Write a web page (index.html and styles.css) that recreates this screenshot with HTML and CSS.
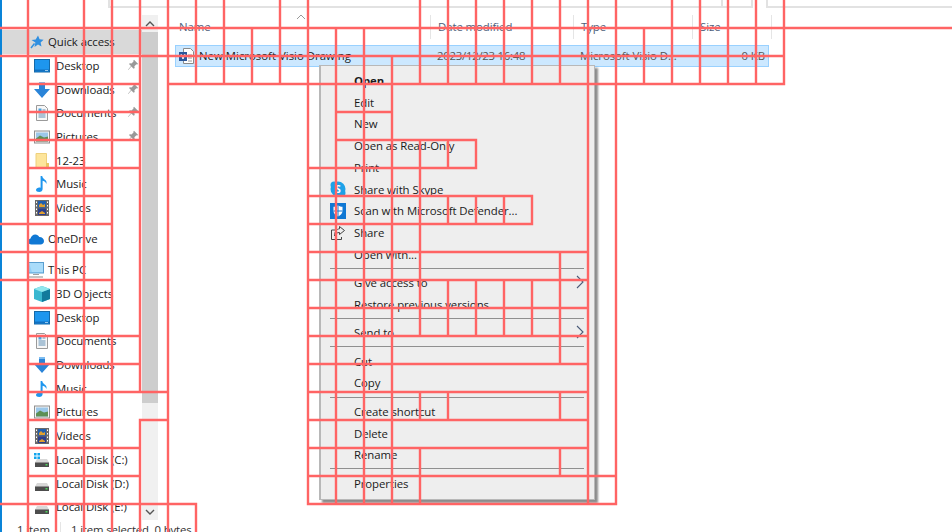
FILE: index.html
```html
<!DOCTYPE html>
<html lang="en">
<head>
<meta charset="utf-8">
<title>File Explorer</title>
<link rel="stylesheet" href="styles.css">
</head>
<body>
<svg class="defs" width="0" height="0" aria-hidden="true">
  <defs>
    <symbol id="i-pin" viewBox="0 0 12 12"><path d="M7 0.8l4.2 4.2-1.2.6-.6-.3-2 2 .3 1.7-1 .8L4.3 7.4 1.3 11 1 10.7l3-3.6-2-2 .9-.9 1.6.2 2-2-.1-.8z" fill="#999"/></symbol>
    <symbol id="i-desktop" viewBox="0 0 16 14"><rect x="0.5" y="0.5" width="15" height="12.5" fill="#1e96ee" stroke="#1569a8"/><rect x="1" y="10.5" width="14" height="2" fill="#1270c0"/><rect x="11" y="11.2" width="3" height="0.8" fill="#bde0f7"/></symbol>
    <symbol id="i-down" viewBox="0 0 16 16"><path d="M5 0h6v7h5l-8 9-8-9h5z" fill="#2a84d8"/><path d="M5 0h6v2H5z" fill="#7dbcf0"/></symbol>
    <symbol id="i-doc" viewBox="0 0 16 16"><path d="M2.5.5h8l3 3v12h-11z" fill="#f7f7f7" stroke="#9a9a9a"/><path d="M4.5 3.5h3v3h-3z" fill="#4aa3e0"/><path d="M8.5 5h3M4.5 8h7M4.5 10h7M4.5 12h7" stroke="#5f8fb5" fill="none"/></symbol>
    <symbol id="i-pic" viewBox="0 0 16 13"><rect x="0.5" y="0.5" width="15" height="12" fill="#f5f5f5" stroke="#8f8f8f"/><rect x="2" y="2" width="12" height="9" fill="#9cc8ea"/><path d="M2 8l4-3 4 2 4-1v5H2z" fill="#5d8f55"/></symbol>
    <symbol id="i-folder" viewBox="0 0 14 16"><path d="M1 .5h10.5v15H1z" fill="#fde59b" stroke="#eed07c"/><path d="M11 10h3v6h-3z" fill="#e9c663"/></symbol>
    <symbol id="i-music" viewBox="0 0 12 16"><path d="M4.6 0h1.6c.4 2.2 2 3 3.600 4.600.8 1 .9 2.300.6 3.400-.4-1.400-1.600-2.500-3.800-3.200V13c0 1.700-1.500 3-3.300 3C1.200 16 0 15.200 0 14c0-1.500 1.800-2.500 3.200-2.500.5 0 1 .1 1.400.3z" fill="#1e96ee"/></symbol>
    <symbol id="i-video" viewBox="0 0 14 16"><rect width="14" height="16" fill="#6a6a6a"/><rect x="3" y="1" width="8" height="6.500" fill="#1f5fb0"/><rect x="3" y="8.500" width="8" height="6.500" fill="#2a3f8f"/><path d="M4 5l2-2 2 2 2-1v3H4zM4 13l3-2 3 2v1H4z" fill="#e0a030"/><path d="M1 1.500h1v1.500H1zM1 5h1v1.500H1zM1 8.500h1V10H1zM1 12h1v1.500H1zM12 1.500h1v1.500h-1zM12 5h1v1.500h-1zM12 8.500h1V10h-1zM12 12h1v1.500h-1z" fill="#fff"/></symbol>
    <symbol id="i-cloud" viewBox="0 0 16 11"><path d="M3.500 11C1.500 11 0 9.700 0 8c0-1.500 1-2.600 2.500-3C3 2.800 5 1 7.300 1c1.800 0 3.200 1 4 2.400C14 3.300 16 5 16 7.500c0 2-1.500 3.500-3.500 3.500z" fill="#0f78d4"/></symbol>
    <symbol id="i-pc" viewBox="0 0 16 16"><rect x="0.500" y="0.500" width="15" height="10.500" fill="#8fd0f8" stroke="#5a9fd0"/><path d="M1 1h14v9H4z" fill="#a9dcfa"/><rect x="5" y="12" width="6" height="1" fill="#a0a0a0"/><rect x="1" y="14" width="14" height="2" fill="#c4c4c4"/></symbol>
    <symbol id="i-cube" viewBox="0 0 16 16"><path d="M8 0l8 3v10l-8 3-8-3V3z" fill="#39b7d0"/><path d="M8 6l8-3v10l-8 3z" fill="#127a9c"/><path d="M8 0l8 3-8 3-8-3z" fill="#8fe6ee"/></symbol>
    <symbol id="i-disk" viewBox="0 0 14 8"><path d="M2 0h10l2 3.500V8H0V3.500z" fill="#d8d8d8"/><rect y="3.500" width="14" height="4.500" fill="#4d4d4d"/><rect x="10.500" y="5" width="2" height="1.500" fill="#4fd35c"/></symbol>
    <symbol id="i-win" viewBox="0 0 7 7"><path d="M0 0h3v3H0zM4 0h3v3H4zM0 4h3v3H0zM4 4h3v3H4z" fill="#12a5ee"/></symbol>
    <symbol id="i-chev" viewBox="0 0 8 14"><path d="M1 1l6 6-6 6" fill="none" stroke="#4a5a78" stroke-width="1.100"/></symbol>
  </defs>
</svg>

<div class="window">
  <div class="toolbar">
    <div class="tool-box tool-address"></div>
    <div class="tool-box tool-refresh"></div>
    <div class="tool-box tool-search"></div>
  </div>
  <div class="panes">
    <nav class="sidebar">
      <div class="tree">
        <div class="row head selected"><svg class="star" viewBox="0 0 14 14"><path d="M8 .5l1.600 3.700 4 .5-3 2.700.9 4-3.500-2-3.500 2.600.9-4.400L1.500 5l4.200-.6z" fill="#2f8fe0"/><path d="M4.500 8.500L1 13" stroke="#2f8fe0" stroke-width="1.500"/></svg><span>Quick access</span></div>
        <div class="row"><svg class="ico ico-w"><use href="#i-desktop"/></svg><span class="name">Desktop</span><svg class="pin"><use href="#i-pin"/></svg></div>
        <div class="row"><svg class="ico"><use href="#i-down"/></svg><span class="name">Downloads</span><svg class="pin"><use href="#i-pin"/></svg></div>
        <div class="row"><svg class="ico"><use href="#i-doc"/></svg><span class="name">Documents</span><svg class="pin"><use href="#i-pin"/></svg></div>
        <div class="row"><svg class="ico ico-w"><use href="#i-pic"/></svg><span class="name">Pictures</span><svg class="pin"><use href="#i-pin"/></svg></div>
        <div class="row"><svg class="ico"><use href="#i-folder"/></svg><span class="name">12-23</span></div>
        <div class="row"><svg class="ico"><use href="#i-music"/></svg><span class="name">Music</span></div>
        <div class="row"><svg class="ico"><use href="#i-video"/></svg><span class="name">Videos</span></div>
        <div class="row head group"><svg class="ico-head"><use href="#i-cloud"/></svg><span>OneDrive</span></div>
        <div class="row head group"><svg class="ico-head"><use href="#i-pc"/></svg><span>This PC</span></div>
        <div class="row"><svg class="ico"><use href="#i-cube"/></svg><span class="name">3D Objects</span></div>
        <div class="row"><svg class="ico ico-w"><use href="#i-desktop"/></svg><span class="name">Desktop</span></div>
        <div class="row"><svg class="ico"><use href="#i-doc"/></svg><span class="name">Documents</span></div>
        <div class="row"><svg class="ico"><use href="#i-down"/></svg><span class="name">Downloads</span></div>
        <div class="row"><svg class="ico"><use href="#i-music"/></svg><span class="name">Music</span></div>
        <div class="row"><svg class="ico ico-w"><use href="#i-pic"/></svg><span class="name">Pictures</span></div>
        <div class="row"><svg class="ico"><use href="#i-video"/></svg><span class="name">Videos</span></div>
        <div class="row"><span class="ico disk-c"><svg class="win"><use href="#i-win"/></svg><svg class="disk"><use href="#i-disk"/></svg></span><span class="name">Local Disk (C:)</span></div>
        <div class="row"><span class="ico disk-c"><svg class="disk"><use href="#i-disk"/></svg></span><span class="name">Local Disk (D:)</span></div>
        <div class="row"><span class="ico disk-c"><svg class="disk"><use href="#i-disk"/></svg></span><span class="name">Local Disk (E:)</span></div>
      </div>
      <div class="scrollbar">
        <div class="sb-btn"><svg viewBox="0 0 10 6"><path d="M1 5l4-4 4 4" fill="none" stroke="#555" stroke-width="1.400"/></svg></div>
        <div class="sb-thumb"></div>
        <div class="sb-rest"></div>
        <div class="sb-btn"><svg viewBox="0 0 10 6"><path d="M1 1l4 4 4-4" fill="none" stroke="#555" stroke-width="1.400"/></svg></div>
      </div>
    </nav>
    <main class="content">
      <div class="columns">
        <div class="col col-name">Name<svg class="sort" viewBox="0 0 10 6"><path d="M1 5l4-4 4 4" fill="none" stroke="#999"/></svg></div>
        <div class="col col-date">Date modified</div>
        <div class="col col-type">Type</div>
        <div class="col col-size">Size</div>
      </div>
      <div class="file">
        <svg class="file-ico" viewBox="0 0 16 16"><path d="M4.500.500h7l3 3v12h-10z" fill="#fff" stroke="#8a8a8a"/><path d="M9 7h4M9 10h4M9 13h4" stroke="#9a9a9a" fill="none"/><rect y="4" width="8" height="9" fill="#2b579a"/><path d="M2 6l2 5 2-5" fill="none" stroke="#fff"/></svg>
        <span class="f-name">New Microsoft Visio Drawing</span>
        <span class="f-date">2023/12/23 16:48</span>
        <span class="f-type">Microsoft Visio D...</span>
        <span class="f-size">0 KB</span>
      </div>
    </main>
  </div>
  <footer class="status">
    <span class="st-count">1 item</span>
    <span class="st-sep"></span>
    <span class="st-sel">1 item selected&nbsp; 0 bytes</span>
  </footer>
</div>

<div class="menu">
  <div class="mi strong">Open</div>
  <div class="mi">Edit</div>
  <div class="mi">New</div>
  <div class="mi">Open as Read-Only</div>
  <div class="mi">Print</div>
  <div class="mi"><svg class="mi-ico" viewBox="0 0 16 16"><circle cx="8" cy="8" r="7.500" fill="#1da1e8"/><circle cx="4" cy="4" r="3.500" fill="#1da1e8"/><circle cx="12" cy="12" r="3.500" fill="#1da1e8"/><text x="8" y="12" text-anchor="middle" class="skype-s">S</text></svg>Share with Skype</div>
  <div class="mi"><svg class="mi-ico" viewBox="0 0 16 16"><rect width="16" height="16" fill="#0f78d4"/><path d="M8 2.500c1.500 1 3.200 1.300 4.500 1.300V8c0 2.700-2 4.300-4.500 5.500C5.500 12.300 3.500 10.700 3.500 8V3.800c1.300 0 3-.3 4.500-1.300z" fill="#fff"/><path d="M8 2.500v11M3.500 8h9" stroke="#0f78d4"/></svg>Scan with Microsoft Defender...</div>
  <div class="mi"><svg class="mi-ico" viewBox="0 0 16 16"><path d="M5 5H1.500v9.500h10V12" fill="none" stroke="#444"/><path d="M9.500 1.500l5 4-5 4V7.500C7 7.500 5.500 8.500 4.500 11 4.500 7 6.500 4 9.500 3.800z" fill="none" stroke="#444"/></svg>Share</div>
  <div class="mi">Open with...</div>
  <div class="sep"></div>
  <div class="mi arrow">Give access to<svg class="chev"><use href="#i-chev"/></svg></div>
  <div class="mi">Restore previous versions</div>
  <div class="sep"></div>
  <div class="mi arrow">Send to<svg class="chev"><use href="#i-chev"/></svg></div>
  <div class="sep"></div>
  <div class="mi">Cut</div>
  <div class="mi">Copy</div>
  <div class="sep"></div>
  <div class="mi">Create shortcut</div>
  <div class="mi">Delete</div>
  <div class="mi">Rename</div>
  <div class="sep"></div>
  <div class="mi">Properties</div>
</div>

<svg class="grid-overlay" width="952" height="532" viewBox="0 0 952 532" aria-hidden="true">
  <path d="M0 28H952M0 56H784M28 84H140M168 84H784M28 112H140M336 112H392M28 140H140M336 140H476M28 168H140M308 168H476M28 196H112M308 196H532M0 224H112M308 224H532M0 252H112M308 252H588M0 280H112M308 280H588M28 308H112M308 308H588M28 336H140M308 336H588M28 364H140M308 364H588M28 392H168M308 392H588M28 420H112M140 420H168M308 420H588M28 448H140M308 448H588M28 476H140M308 476H616M0 504H196M308 504H616
  M28 0V532M56 56V532M84 0V532M112 0V532M140 0V392M140 420V532M168 0V532M196 0V84M196 504V532M224 0V84M252 28V84M280 0V84M308 0V504M336 28V504M364 28V504M392 56V504
  M420 0V84M420 140V336M420 392V420M420 448V504M448 0V84M448 140V168M448 196V224M448 280V336M448 392V420M476 0V84M476 140V168M476 196V224M476 280V336M504 0V84M504 196V224M504 280V336M532 0V84M532 196V224M532 280V336M560 0V84M560 252V364M560 392V420M560 448V476M588 0V504M616 0V504M644 28V84M672 0V84M700 0V84M728 0V84M756 0V84M784 0V84"/>
</svg>
</body>
</html>
```
FILE: styles.css
```css
* { box-sizing: border-box; }
html, body { margin: 0; padding: 0; width: 952px; height: 532px; overflow: hidden; background: #fff; }
body { position: relative; font-family: "Open Sans", "Noto Sans", sans-serif; font-size: 11.4px; letter-spacing: -0.08px; color: #1a1a1a; }
.defs { position: absolute; }
svg { display: block; flex: none; }

.window { height: 532px; display: flex; flex-direction: column; border-left: 2px solid #0a84d8; overflow: hidden; }

.toolbar { height: 8px; flex: none; display: flex; padding-left: 106px; }
.tool-box { height: 8px; border: 2px solid #e2e2e2; border-top: 0; }
.tool-address { width: 615px; }
.tool-refresh { width: 30px; border-left: 0; }
.tool-search { flex: 1; margin-left: 13px; border-right: 0; }

.panes { height: 512px; flex: none; display: flex; }

.sidebar { width: 156px; flex: none; display: flex; position: relative; }
.tree { width: 140px; flex: none; padding-top: 22px; }
.row { height: 23.7px; display: flex; align-items: center; padding-left: 32px; position: relative; line-height: 16px; white-space: nowrap; }
.row.head { padding-left: 28px; gap: 4px; }
.row.selected { background: #d9d9d9; height: 24px; }
.row.group { margin-top: 7.5px; }
.star { width: 14px; height: 14px; }
.ico-head { width: 16px; height: 16px; margin-left: -2px; }
.ico { width: 16px; height: 16px; margin-right: 6px; display: block; position: relative; }
.ico-w { height: 14px; }
.name { flex: 1; }
.pin { width: 12px; height: 12px; position: absolute; left: 125px; top: 5px; }
.disk-c { display: flex; align-items: flex-end; }
.disk { width: 14px; height: 8px; margin-left: 1px; margin-bottom: 1px; }
.win { width: 6px; height: 6px; position: absolute; left: 0; top: 1px; }

.scrollbar { width: 16px; flex: none; margin-top: 7px; display: flex; flex-direction: column; background: #f0f0f0; }
.sb-btn { height: 17px; flex: none; display: flex; align-items: center; justify-content: center; }
.sb-btn svg { width: 10px; height: 6px; }
.sb-thumb { height: 371px; flex: none; background: #cdcdcd; }
.sb-rest { flex: 1; }

.content { flex: 1; min-width: 0; padding: 7px 0 0 15px; }
.columns { display: flex; height: 24px; position: relative; }
.col { padding-left: 6px; color: #4c607a; line-height: 24px; border-right: 1px solid #e5e5e5; position: relative; }
.col-name { width: 258px; }
.col-date { width: 143px; padding-left: 7px; }
.col-type { width: 119px; padding-left: 7px; }
.col-size { width: 79px; padding-left: 7px; }
.sort { width: 10px; height: 6px; position: absolute; left: 123px; top: -1px; }

.file { margin: 6px 0 0 2px; width: 594px; height: 22px; background: #cce8ff; border: 1px solid #99d1ff; display: flex; align-items: center; white-space: nowrap; line-height: 18px; padding-bottom: 1px; }
.file-ico { width: 16px; height: 16px; margin-left: 3px; }
.f-name { width: 238px; margin-left: 4px; letter-spacing: 0; }
.f-date { width: 143px; color: #555; letter-spacing: -0.26px; }
.f-type { width: 125px; color: #555; }
.f-size { width: 60px; text-align: right; color: #555; }

.status { flex: 1; display: flex; align-items: flex-start; padding-top: 2px; color: #333; }
.st-count { width: 43px; margin-left: 15px; line-height: 16px; }
.st-sep { width: 1px; height: 16px; background: #e5e5e5; }
.st-sel { margin-left: 10px; line-height: 16px; letter-spacing: -0.16px; }

.menu { position: absolute; left: 319px; top: 65px; width: 276px; height: 435px; background: #eee; border: solid #b8b8b8; border-width: 1px 1px 1px 2px; padding-top: 3.5px; box-shadow: 3px 3px 2px rgba(0,0,0,.45); }
.mi { height: 21.75px; padding-left: 33px; display: flex; align-items: center; position: relative; white-space: nowrap; }
.strong { font-weight: 700; }
.mi-ico { width: 16px; height: 16px; position: absolute; left: 9px; top: 3px; }
.skype-s { font-family: "Open Sans", sans-serif; font-size: 10px; font-weight: 700; fill: #fff; }
.sep { height: 1px; margin: 2.8px 10px 2.8px 9px; background: #8f8f8f; }
.chev { width: 8px; height: 14px; position: absolute; right: 10px; top: 3px; }

.grid-overlay { position: absolute; left: 0; top: 0; pointer-events: none; }
.grid-overlay path { fill: none; stroke: #ff6464; stroke-width: 2.4; stroke-linecap: square; }
```
